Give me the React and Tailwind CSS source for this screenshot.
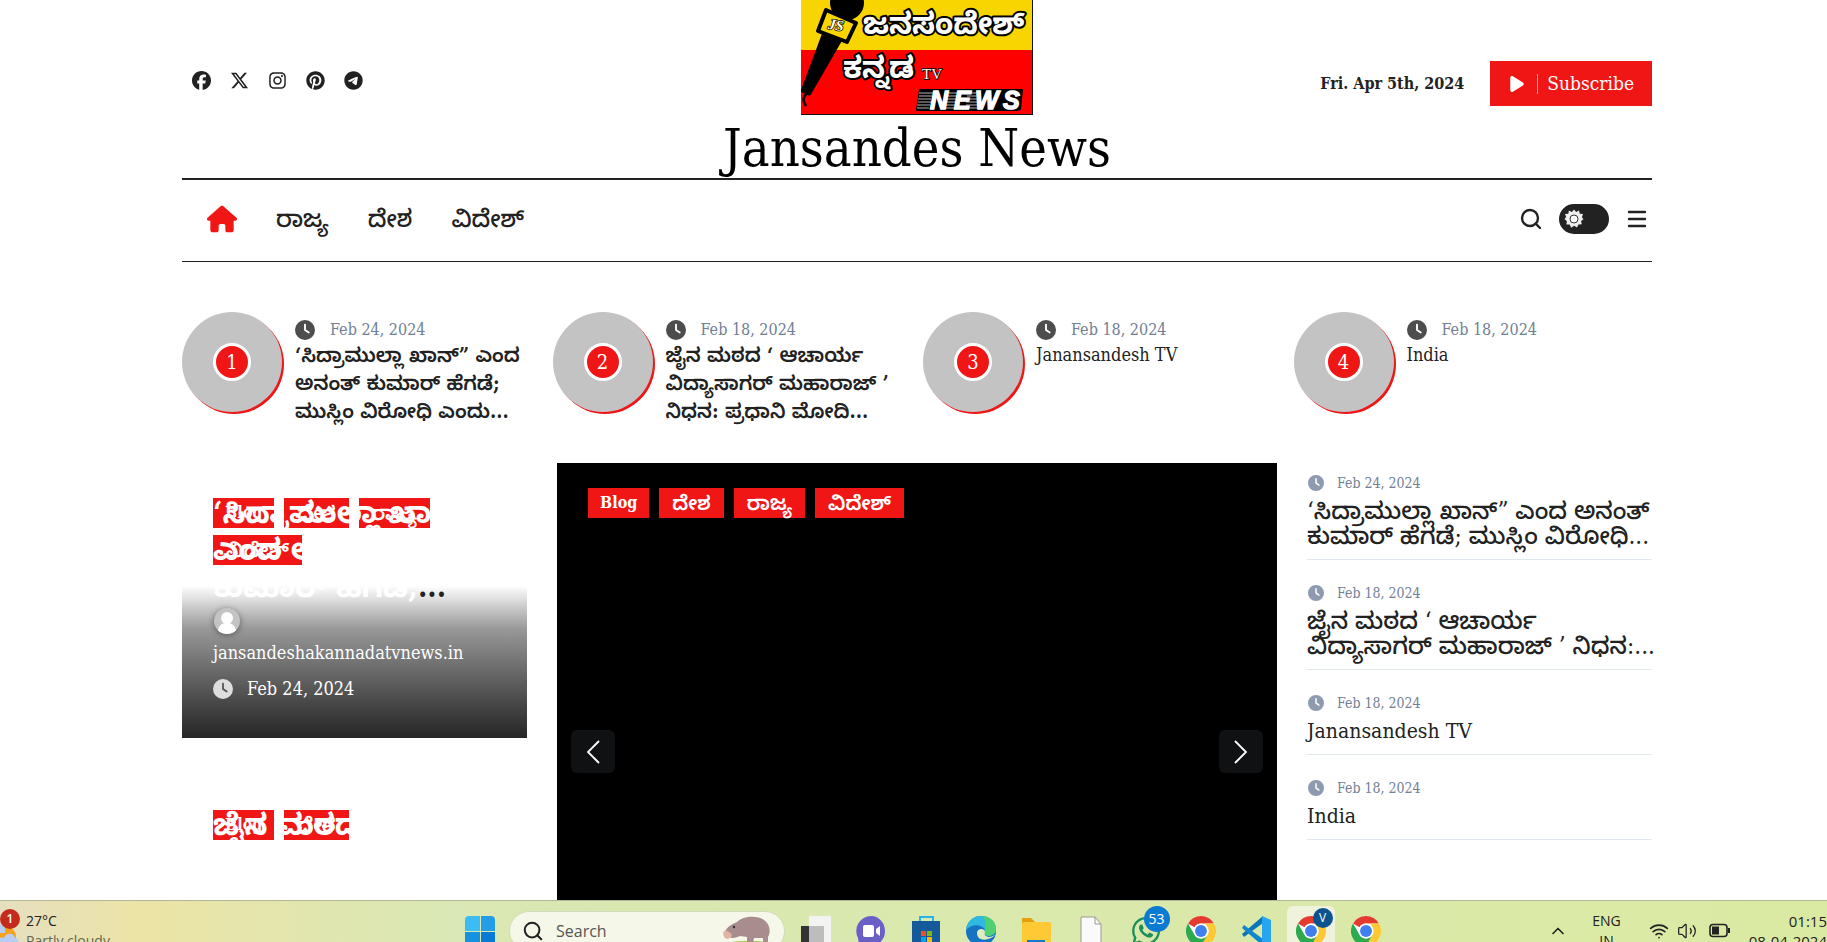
import React from "react";
import {
  FaFacebook,
  FaXTwitter,
  FaInstagram,
  FaPinterest,
  FaTelegram,
  FaHouse,
  FaClock,
  FaPlay,
  FaWhatsapp,
} from "react-icons/fa6";
import { Search, Menu, ChevronUp, Wifi, Volume2 } from "lucide-react";

const trending = [
  { n: 1, date: "Feb 24, 2024", kn: true, lines: ["‘ಸಿದ್ರಾಮುಲ್ಲಾ ಖಾನ್” ಎಂದ", "ಅನಂತ್ ಕುಮಾರ್ ಹೆಗಡೆ;", "ಮುಸ್ಲಿಂ ವಿರೋಧಿ ಎಂದು..."] },
  { n: 2, date: "Feb 18, 2024", kn: true, lines: ["ಜೈನ ಮಠದ ‘ ಆಚಾರ್ಯ", "ವಿದ್ಯಾಸಾಗರ್ ಮಹಾರಾಜ್ ’", "ನಿಧನ: ಪ್ರಧಾನಿ ಮೋದಿ..."] },
  { n: 3, date: "Feb 18, 2024", lines: ["Janansandesh TV"] },
  { n: 4, date: "Feb 18, 2024", lines: ["India"] },
];

const latest = [
  { date: "Feb 24, 2024", kn: true, lines: ["‘ಸಿದ್ರಾಮುಲ್ಲಾ ಖಾನ್” ಎಂದ ಅನಂತ್", "ಕುಮಾರ್ ಹೆಗಡೆ; ಮುಸ್ಲಿಂ ವಿರೋಧಿ..."] },
  { date: "Feb 18, 2024", kn: true, lines: ["ಜೈನ ಮಠದ ‘ ಆಚಾರ್ಯ", "ವಿದ್ಯಾಸಾಗರ್ ಮಹಾರಾಜ್ ’ ನಿಧನ:..."] },
  { date: "Feb 18, 2024", lines: ["Janansandesh TV"] },
  { date: "Feb 18, 2024", lines: ["India"] },
];

const socials = [
  ["Facebook", FaFacebook],
  ["X", FaXTwitter],
  ["Instagram", FaInstagram],
  ["Pinterest", FaPinterest],
  ["Telegram", FaTelegram],
];

function Logo() {
  return (
    <svg className="block h-[115px] w-[232px]" viewBox="0 0 232 115" role="img" aria-label="Jansandesh Kannada TV News">
      <rect width="232" height="115" fill="#111" />
      <rect width="231" height="50" fill="#f8d500" />
      <rect y="50" width="231" height="64" fill="#fe0000" />
      <circle cx="46" cy="3" r="17" fill="#000" />
      <path d="M22 31 L42 39 L9 96 L0 92 L0 90 Z" fill="#000" />
      <path d="M6 93 C1 98 2 101 5 106" fill="none" stroke="#000" strokeWidth="2.5" />
      <path d="M25 10 L55 23 L46 42 L17 31 Z" fill="#f8d500" stroke="#000" strokeWidth="4" strokeLinejoin="round" />
      <text x="27" y="30" transform="rotate(8 35 25)" fontFamily="Liberation Serif, serif" fontWeight="700" fontStyle="italic" fontSize="15" fill="#fff" stroke="#000" strokeWidth="1.5" paintOrder="stroke">JS</text>
      <g fontFamily="Noto Sans Kannada, Noto Sans, sans-serif" fontWeight="700" fill="#fff" stroke="#000" strokeWidth="4" strokeLinejoin="round" paintOrder="stroke">
        <text x="62" y="34" fontSize="30">ಜನಸಂದೇಶ್</text>
        <text x="42" y="78" fontSize="30">ಕನ್ನಡ</text>
      </g>
      <text x="121" y="79" fontFamily="Liberation Serif, serif" fontSize="15" fill="#fff" stroke="#000" strokeWidth="1.5" paintOrder="stroke">TV</text>
      <path d="M119 90 H221 L219 109 L216 110 H116 Z" fill="#000" stroke="#000" strokeWidth="2" strokeLinejoin="round" />
      <g stroke="#fff" strokeWidth="0.7">
        <path d="M118 93h14M118 96h13M117 99h13M117 102h13M116 105h13M116 108h12" />
        <path d="M146 93h10M146 96h10M145 99h10M145 102h10M144 105h10M144 108h10" />
        <path d="M166 93h12M166 96h12M166 99h12M165 102h12M165 105h12M165 108h12" />
      </g>
      <g fontFamily="Liberation Sans, sans-serif" fontWeight="700" fontStyle="italic" fontSize="25" fill="#fff" stroke="#fff" strokeWidth="1.4">
        <text x="129" y="109">N</text>
        <text x="153" y="109">E</text>
        <text x="174" y="109">W</text>
        <text x="202" y="109">S</text>
      </g>
    </svg>
  );
}

function Tag({ kn, children }) {
  return (
    <a
      href="#"
      className={
        kn
          ? "flex h-[30px] items-center bg-[#f01616] px-[13px] text-xl leading-[30px] font-semibold text-white"
          : "flex h-[30px] items-center bg-[#f01616] px-3 text-base font-bold text-white"
      }
    >
      {children}
    </a>
  );
}

function Lines({ lines }) {
  return lines.map((line) => (
    <span key={line} className="block whitespace-nowrap">
      {line}
    </span>
  ));
}

function DarkGear() {
  return (
    <svg viewBox="0 0 20 20" className="size-5">
      <path
        d="M10 0.5l2.1 2.6 3-1.5.6 3.2 3.3.3-1.1 3.1 1.6 2-2.4 1.8.6 3.3-3.3.1-1.4 3-2.9-1.6-2.9 1.9-1.5-3.1-3.3 0 .5-3.3L.5 10l1.7-2L1 5l3.3-.3.6-3.2 3 1.5z"
        fill="#eee"
      />
      <circle cx="10" cy="10" r="4" fill="#fff" stroke="#333" strokeWidth="1" />
    </svg>
  );
}

function Chrome() {
  return (
    <svg viewBox="0 0 48 48" className="size-[30px]">
      <circle cx="24" cy="24" r="24" fill="#fff" />
      <path d="M24 0a24 24 0 0 1 20.8 12H24a12 12 0 0 0-10.4 6L3.2 12A24 24 0 0 1 24 0z" fill="#e33b2e" />
      <path d="M44.8 12A24 24 0 0 1 24 48l10.4-18a12 12 0 0 0 0-12L31 12z" fill="#fcc934" />
      <path d="M3.2 12A24 24 0 0 0 24 48l10.4-18a12 12 0 0 1-20.8 0z" fill="#2da94f" />
      <circle cx="24" cy="24" r="12" fill="#fff" />
      <circle cx="24" cy="24" r="9.5" fill="#3f7ff0" />
    </svg>
  );
}

function TaskIcon({ label, active, children }) {
  return (
    <div className="flex h-full w-[55px] items-center justify-center">
      <button
        aria-label={label}
        className={
          active
            ? "relative flex h-[50px] w-12 items-center justify-center rounded-md bg-[#f0f3dc]"
            : "relative flex h-[50px] w-12 items-center justify-center"
        }
      >
        {children}
      </button>
    </div>
  );
}

function Taskbar() {
  return (
    <footer className="h-[42px] shrink-0 overflow-hidden border-t border-[#b3b795] font-['Open_Sans','Noto_Sans',sans-serif] text-[#222]">
      <div className="flex h-[60px] items-center bg-linear-to-r from-[#e5e5c0] via-[#d9e8b2] via-30% to-[#dbeaa2]">
        <div className="flex w-[465px] items-center bg-linear-to-r from-[#e6dfc0] via-[#ece4a6] via-30% to-[#d8e8b6]">
          <div className="relative h-[60px] w-[26px]">
            <svg viewBox="0 0 26 60" className="h-[60px] w-[26px]">
              <circle cx="5" cy="36" r="11" fill="#f7a21b" />
              <path d="M-5 28c4-8 10-4 10 0v4h-10z" fill="#b7cdf4" />
              <path d="M-5 42c0-6 8-6 9-5 2-6 10-5 11 0 4 0 4 5 2 6H-5z" fill="#b7cdf4" />
            </svg>
            <span className="absolute top-[8px] left-0 flex size-5 items-center justify-center rounded-full bg-[#c42b1c] text-xs font-semibold text-white">1</span>
          </div>
          <div className="text-sm leading-5">
            <div>27°C</div>
            <div className="text-[#666950]">Partly cloudy</div>
          </div>
        </div>
        <div className="flex h-full items-center">
          <button aria-label="Start" className="mr-[14px] grid size-[30px] grid-cols-2 gap-px">
            <span className="rounded-tl-sm bg-[#3cbcf5]" />
            <span className="rounded-tr-sm bg-[#239de6]" />
            <span className="bg-[#1491df]" />
            <span className="bg-[#0a7bd4]" />
          </button>
          <div className="mr-[3px] flex h-10 w-[276px] items-center rounded-full border border-[#d5dabc] bg-[#f5f7e9] pr-[10px] pl-[12px]">
            <Search className="size-[22px] text-[#222]" strokeWidth={2.2} />
            <input aria-label="Search" placeholder="Search" className="ml-3 w-[165px] bg-transparent text-base outline-none placeholder:text-[#555]" />
            <svg viewBox="0 0 52 34" className="h-[34px] w-[52px]">
              <ellipse cx="28" cy="30" rx="24" ry="3" fill="#9bbf3a" />
              <path d="M4 18C6 12 12 10 16 8c6-6 20-7 27-2 6 4 7 12 4 17v7h-5v-6H33l-1 6h-6v-7l-7-1c-4 2-9 3-13 0-3-2-3-3-2-4z" fill="#a98c8d" />
              <path d="M3 17c3-1 8 2 8 5l-4 3c-4 0-6-5-4-8z" fill="#e0b3a2" />
              <circle cx="13" cy="13" r="1.2" fill="#333" />
            </svg>
          </div>
          <TaskIcon label="Task view">
            <svg viewBox="0 0 30 30" className="size-[30px]">
              <rect y="10" width="23" height="20" fill="#333" />
              <rect x="8" width="22" height="28" rx="1" fill="#f3f3f3" />
              <rect x="8" y="10" width="15" height="18" fill="#bdbdbd" />
            </svg>
          </TaskIcon>
          <TaskIcon label="Chat">
            <svg viewBox="0 0 30 30" className="size-[30px]">
              <path d="M15 0a14 15 0 0 1 0 30H3l-1-8A15 15 0 0 1 15 0z" fill="#6a5fc7" />
              <rect x="7" y="9" width="11" height="12" rx="2" fill="#fff" />
              <path d="M20 13l4-3v10l-4-3z" fill="#fff" />
            </svg>
          </TaskIcon>
          <TaskIcon label="Store">
            <svg viewBox="0 0 30 30" className="size-[30px]">
              <path d="M9 5V1h13v4" fill="none" stroke="#25b4ee" strokeWidth="2" />
              <path d="M1 5h28v22a3 3 0 0 1-3 3H4a3 3 0 0 1-3-3z" fill="#15599b" />
              <path d="M10 15h5v5h-5z" fill="#f25022" />
              <path d="M16 15h5v5h-5z" fill="#7fba00" />
              <path d="M10 21h5v5h-5z" fill="#00a4ef" />
              <path d="M16 21h5v5h-5z" fill="#ffb900" />
            </svg>
          </TaskIcon>
          <TaskIcon label="Edge">
            <svg viewBox="0 0 30 30" className="size-[30px]">
              <circle cx="15" cy="15" r="15" fill="#1673c4" />
              <path d="M0 14C1 5 8 0 15 0c9 0 15 6 15 13 0 5-4 7-8 7-4-1-4-3-3-5 0-6-13-9-19-1z" fill="#2fb8e0" />
              <path d="M17 0c8 1 13 6 13 13 0 5-4 7-8 7-4-1-4-3-3-5 0-5 2-8-2-15z" fill="#4fd072" />
              <path d="M11 17c0-4 5-5 7-3 2 1 0 3 1 5 1 2 5 3 10 0-4 5-18 8-18-2z" fill="#e2ecc2" />
            </svg>
          </TaskIcon>
          <TaskIcon label="File Explorer">
            <svg viewBox="0 0 30 30" className="size-[30px]">
              <path d="M1 2h9l4 4v8H1z" fill="#e3a008" />
              <rect x="1" y="6" width="29" height="24" rx="2" fill="#fdc934" />
              <path d="M6 24h18v6H6z" fill="#1578c8" />
            </svg>
          </TaskIcon>
          <TaskIcon label="Document">
            <svg viewBox="0 0 30 30" className="size-[30px]">
              <path d="M5 1h14l6 7v22H5z" fill="#fafafa" stroke="#999" />
              <path d="M19 1v7h6" fill="none" stroke="#999" />
            </svg>
          </TaskIcon>
          <TaskIcon label="WhatsApp">
            <FaWhatsapp className="size-8 text-[#1c8f5a]" />
            <span className="absolute top-0 right-0 flex size-[26px] items-center justify-center rounded-full bg-[#0b7ad1] text-sm text-white">53</span>
          </TaskIcon>
          <TaskIcon label="Chrome"><Chrome /></TaskIcon>
          <TaskIcon label="Visual Studio Code">
            <svg viewBox="0 0 30 30" className="size-[30px]">
              <path d="M22 7L3 21l-2-3L22 0z" fill="#0a76b8" />
              <path d="M22 23L3 9l-2 3 21 18z" fill="#1186cf" />
              <path d="M21 0l9 4v22l-9 4z" fill="#29a4ee" />
            </svg>
          </TaskIcon>
          <TaskIcon label="Chrome, profile V" active>
            <Chrome />
            <span className="absolute top-[2px] right-[2px] flex size-5 items-center justify-center rounded-full bg-[#0c5490] text-xs text-white">V</span>
          </TaskIcon>
          <TaskIcon label="Chrome window"><Chrome /></TaskIcon>
        </div>
        <div className="ml-auto flex items-center text-sm leading-5">
          <ChevronUp className="mr-6 size-5" />
          <div className="mr-7 text-center"><div>ENG</div><div>IN</div></div>
          <Wifi className="mr-2 size-5" />
          <Volume2 className="mr-3 size-5" strokeWidth={1.5} />
          <svg viewBox="0 0 22 16" className="mr-[18px] h-4 w-[22px]">
            <rect x="1" y="1.5" width="17" height="12" rx="3" fill="none" stroke="#222" strokeWidth="1.6" />
            <rect x="3" y="3.5" width="7" height="8" fill="#222" />
            <rect x="19" y="5" width="2" height="5" fill="#222" />
          </svg>
          <div className="text-right text-[15px]"><div>01:15</div><div>08-04-2024</div></div>
        </div>
      </div>
    </footer>
  );
}

export default function App() {
  return (
    <div className="flex h-screen flex-col overflow-hidden bg-white font-['DejaVu_Serif_Condensed','DejaVu_Serif','Noto_Sans_Kannada',serif] text-[#222]">
      <div className="min-h-0 flex-1 overflow-hidden pr-[175px] pl-[182px]">
        <header className="grid h-[180px] grid-cols-[1fr_auto_1fr] border-b-2 border-[#222]">
          <div className="flex h-[160px] items-center gap-[19px] pl-[10px]">
            {socials.map(([name, Icon]) => (
              <a key={name} href="#" aria-label={name}>
                <Icon className="size-[19px]" />
              </a>
            ))}
          </div>
          <div className="flex flex-col items-center">
            <Logo />
            <h1 className="text-[52px] leading-[66px] font-medium text-black">Jansandes News</h1>
          </div>
          <div className="flex h-[167px] items-center justify-end gap-[26px]">
            <span className="text-base font-bold">Fri. Apr 5th, 2024</span>
            <button className="flex h-[45px] items-center bg-[#f01616] px-[18px] text-[19px] text-white">
              <FaPlay className="size-[18px]" />
              <span className="mr-[9px] ml-[11px] h-5 w-px bg-[#f8a0a0]" />
              Subscribe
            </button>
          </div>
        </header>

        <nav className="flex h-[82px] items-center justify-between border-b border-[#222] pr-[3px] pb-[3px] pl-[25px]">
          <div className="flex items-center gap-[39px] text-2xl font-medium">
            <a href="#" aria-label="Home"><FaHouse className="size-[30px] text-[#f01616]" /></a>
            <a href="#">ರಾಜ್ಯ</a>
            <a href="#">ದೇಶ</a>
            <a href="#">ವಿದೇಶ್</a>
          </div>
          <div className="flex items-center gap-[16px]">
            <button aria-label="Search"><Search className="size-6" strokeWidth={2.4} /></button>
            <button aria-label="Toggle theme" className="flex h-[30px] w-[50px] items-center rounded-full bg-[#222] pl-[5px]">
              <DarkGear />
            </button>
            <button aria-label="Menu"><Menu className="size-6" strokeWidth={2.4} /></button>
          </div>
        </nav>

        <section className="mt-[50px] grid h-[110px] grid-cols-4 gap-3">
          {trending.map((t) => (
            <article key={t.n} className="flex gap-[13px]">
              <div className="flex size-[100px] shrink-0 items-center justify-center rounded-full bg-[#c3c3c3] shadow-[2px_2px_0_#f01616]">
                <span className="flex size-[38px] items-center justify-center rounded-full border-[3px] border-white bg-[#f01616] text-xl text-white">
                  {t.n}
                </span>
              </div>
              <div className="min-w-0 pt-[7px]">
                <div className="flex h-[22px] items-center gap-[15px] text-base text-[#718096]">
                  <FaClock className="size-5 text-[#4d4d4d]" />
                  {t.date}
                </div>
                <h3 className={t.kn ? "text-xl leading-[28px] font-semibold" : "text-lg leading-[28px] font-medium"}>
                  <Lines lines={t.lines} />
                </h3>
              </div>
            </article>
          ))}
        </section>

        <section className="mt-[41px] grid h-[500px] grid-cols-[345fr_720fr_345fr] gap-[30px]">
          <div className="flex min-w-0 flex-col gap-[37px]">
            <article className="relative flex h-[275px] flex-col px-[31px] pt-[35px]">
              <div className="absolute inset-x-0 bottom-0 h-[152px] bg-linear-to-b from-white via-[#999] via-28% to-[#262626]" />
              <div className="relative flex h-[67px] max-w-[270px] flex-wrap gap-x-[10px] gap-y-[7px]">
                <Tag>Blog</Tag>
                <Tag kn>ದೇಶ</Tag>
                <Tag kn>ರಾಜ್ಯ</Tag>
                <Tag kn>ವಿದೇಶ್</Tag>
              </div>
              <h2 className="absolute inset-x-[31px] top-[31px] text-[30px] leading-[37px] font-bold whitespace-nowrap text-white">
                ‘ಸಿದ್ರಾಮುಲ್ಲಾ ಖಾನ್”<br />ಎಂದ ಅನಂತ್<br />ಕುಮಾರ್ ಹೆಗಡೆ;<span className="text-[#222]">...</span>
              </h2>
              <div className="relative mt-[43px] text-lg text-white">
                <svg viewBox="0 0 26 26" className="ml-px size-[26px] rounded-full shadow-[0_1px_6px_rgba(0,0,0,0.4)]">
                  <circle cx="13" cy="13" r="13" fill="#c4c4c4" />
                  <circle cx="13" cy="10" r="6" fill="#fff" />
                  <path d="M4 23c1-7 5-8 9-8s8 1 9 8a13 13 0 0 1-18 0z" fill="#fff" />
                </svg>
                <div className="mt-[5px] leading-[28px]">jansandeshakannadatvnews.in</div>
                <div className="mt-2 flex items-center gap-[14px] leading-[28px]">
                  <FaClock className="size-5 text-[#dedede]" />
                  Feb 24, 2024
                </div>
              </div>
            </article>
            <article className="relative px-[31px] pt-[35px]">
              <div className="flex gap-[10px]">
                <Tag>Blog</Tag>
                <Tag kn>ದೇಶ</Tag>
              </div>
              <h2 className="absolute top-[31px] left-[31px] text-[30px] leading-[37px] font-bold whitespace-nowrap text-white">ಜೈನ ಮಠದ</h2>
            </article>
          </div>

          <div className="flex flex-col bg-black px-[14px] pt-[25px]">
            <div className="flex gap-[10px] pl-[17px]">
              <Tag>Blog</Tag>
              <Tag kn>ದೇಶ</Tag>
              <Tag kn>ರಾಜ್ಯ</Tag>
              <Tag kn>ವಿದೇಶ್</Tag>
            </div>
            <div className="mt-[212px] flex justify-between">
              {["Previous", "Next"].map((d, i) => (
                <button key={d} aria-label={d} className="flex h-[43px] w-11 items-center justify-center rounded-md bg-[#0f1112]">
                  <svg viewBox="0 0 24 24" className="size-6" fill="none" stroke="#fff" strokeWidth="1.8">
                    <path d={i ? "M6 1l11 11L6 23" : "M18 1L7 12l11 11"} />
                  </svg>
                </button>
              ))}
            </div>
          </div>

          <div className="min-w-0">
            {latest.map((t, i) => (
              <article key={i} className="border-b border-[#e2e8f0] pt-[22px] pb-[10px] first:pt-[9px]">
                <div className="mb-[5px] flex h-[22px] items-center gap-[13px] pl-px text-sm text-[#718096]">
                  <FaClock className="size-4 text-[#8e9ab0]" />
                  {t.date}
                </div>
                <h3 className={t.kn ? "text-2xl leading-[25px] font-medium" : "text-[21px] leading-[25px] font-medium"}>
                  <Lines lines={t.lines} />
                </h3>
              </article>
            ))}
          </div>
        </section>
      </div>
      <Taskbar />
    </div>
  );
}
